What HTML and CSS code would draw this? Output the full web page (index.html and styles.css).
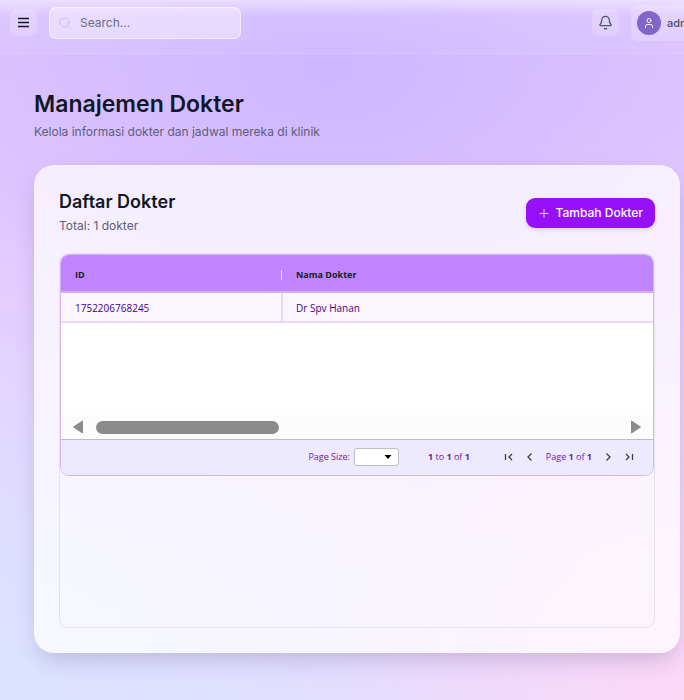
FILE: index.html
```html
<!DOCTYPE html>
<html lang="id">
<head>
<meta charset="utf-8">
<meta name="viewport" content="width=device-width, initial-scale=1">
<title>Manajemen Dokter</title>
<link rel="stylesheet" href="styles.css">
</head>
<body>
<header class="topbar">
  <button class="icon-btn menu" type="button" aria-label="Menu">
    <svg width="13" height="13" viewBox="0 0 13 13" stroke="currentColor" stroke-width="1.5"><path d="M1 2.500h11M1 6.500h11M1 10.500h11"/></svg>
  </button>
  <div class="search">
    <svg width="12" height="12" viewBox="0 0 24 24" fill="none" stroke="currentColor" stroke-width="2" stroke-linecap="round"><circle cx="11" cy="11" r="9"/><path d="m22 22-4.500-4.500"/></svg>
    <input type="search" placeholder="Search..." aria-label="Search">
  </div>
  <button class="icon-btn bell" type="button" aria-label="Notifications">
    <svg width="15" height="15" viewBox="0 0 24 24" fill="none" stroke="currentColor" stroke-width="2" stroke-linecap="round" stroke-linejoin="round"><path d="M10.300 21.500a2 2 0 0 0 3.400 0M3.300 15.300A1 1 0 0 0 4 17h16a1 1 0 0 0 .7-1.700C19.400 14 18 12.500 18 8A6 6 0 0 0 6 8c0 4.500-1.400 6-2.700 7.300"/></svg>
  </button>
  <button class="user" type="button">
    <span class="avatar"><svg width="12" height="12" viewBox="0 0 24 24" fill="none" stroke="currentColor" stroke-width="2" stroke-linecap="round"><circle cx="12" cy="7" r="4"/><path d="M5 21v-2a4 4 0 0 1 4-4h6a4 4 0 0 1 4 4v2"/></svg></span>
    <span>admin</span>
  </button>
</header>
<main class="page">
  <h1>Manajemen Dokter</h1>
  <p class="lead">Kelola informasi dokter dan jadwal mereka di klinik</p>
  <section class="card">
    <div class="card-head">
      <div>
        <h2>Daftar Dokter</h2>
        <p class="total">Total: 1 dokter</p>
      </div>
      <button class="add" type="button">
        <svg width="12" height="12" viewBox="0 0 12 12" fill="none" stroke="currentColor" stroke-opacity="0.8" stroke-linecap="round"><path d="M2 6.500h8M6 2.500v8"/></svg>
        Tambah Dokter
      </button>
    </div>
    <div class="frame">
      <div class="grid">
        <table>
          <thead><tr><th class="col-id" scope="col"><span>ID</span></th><th scope="col">Nama Dokter</th></tr></thead>
          <tbody><tr><td>1752206768245</td><td>Dr Spv Hanan</td></tr></tbody>
        </table>
        <div class="empty"></div>
        <div class="scroll">
          <button type="button" aria-label="Scroll left"><svg width="12" height="14" viewBox="0 0 12 14"><path d="M10.500 1 1.500 7 10.500 13z"/></svg></button>
          <div class="track"><div class="thumb"></div></div>
          <button type="button" aria-label="Scroll right"><svg width="12" height="14" viewBox="0 0 12 14"><path d="M1.500 1 10.500 7 1.500 13z"/></svg></button>
        </div>
        <div class="pager">
          <div class="size">
            <label for="page-size">Page Size:</label>
            <span class="select">
              <select id="page-size"><option></option></select>
              <svg width="8" height="4" viewBox="0 0 8 4"><path d="M0.500 0h7L4 4z"/></svg>
            </span>
          </div>
          <span class="range"><b>1</b> to <b>1</b> of <b>1</b></span>
          <div class="nav">
            <button type="button" aria-label="First page"><svg width="10" height="10" viewBox="0 0 10 10"><path d="M1.500 2v6M8 2 5 5l3 3"/></svg></button>
            <button type="button" aria-label="Previous page"><svg width="10" height="10" viewBox="0 0 10 10"><path d="M6.500 1.500 3 5l3.500 3.500"/></svg></button>
            <span>Page <b>1</b> of <b>1</b></span>
            <button type="button" aria-label="Next page"><svg width="10" height="10" viewBox="0 0 10 10"><path d="M3.500 1.500 7 5 3.500 8.500"/></svg></button>
            <button type="button" aria-label="Last page"><svg width="10" height="10" viewBox="0 0 10 10"><path d="M8.500 2v6M2 2l3 3-3 3"/></svg></button>
          </div>
        </div>
      </div>
    </div>
  </section>
</main>
</body>
</html>
```
FILE: styles.css
```css
* { box-sizing: border-box; }
html { min-height: 100%; }
body {
  margin: 0;
  min-height: 100vh;
  overflow-x: hidden;
  font-family: Inter, sans-serif;
  font-size: 12px;
  line-height: 18px;
  color: #101828;
  background:
    radial-gradient(ellipse 65% 40% at 48% 10%, #cdb7ff 0%, #cdb7ff00 100%),
    radial-gradient(circle at 0% 100%, #dce3ff 0%, #dce3ff00 50%),
    radial-gradient(circle at 100% 100%, #fcd7f8 0%, #fcd7f800 40%),
    linear-gradient(180deg, #dcc3ff 0%, #e6caff 45%, #e4dcff 100%);
}
button, input, select { font: inherit; color: inherit; }
button { padding: 0; border: 0; background: none; display: flex; align-items: center; justify-content: center; }
h1, h2, p { margin: 0; }

.topbar {
  display: flex;
  align-items: center;
  height: 54px;
  padding: 0 0 8px 10px;
  overflow: hidden;
  border-bottom: 1px solid #ffffff33;
  background: linear-gradient(180deg, #ffffff80 0, #ffffff1a 16px, #ffffff0d 100%) padding-box;
}
.icon-btn { flex: none; width: 27px; height: 27px; border-radius: 7px; background: #ffffff33; color: #4a5565; }
.menu { color: #101828; }
.search {
  display: flex;
  align-items: center;
  gap: 9px;
  width: 192px;
  height: 32px;
  margin: 0 auto 0 12px;
  padding: 0 9px;
  border: 1px solid #ffffff80;
  border-radius: 7px;
  background: #ffffff66;
  color: #cbc4d9;
}
.search svg { flex: none; }
.search input { width: 100%; min-width: 0; padding: 0; border: 0; outline: 0; background: none; color: #101828; }
.search input::placeholder { color: #6a6f88; opacity: 1; }
.user {
  flex: none;
  gap: 6px;
  width: 53px;
  height: 36px;
  margin-left: 12px;
  padding-left: 6px;
  justify-content: flex-start;
  border-radius: 7px 0 0 7px;
  background: #ffffff33;
  font-size: 11px;
  font-weight: 500;
  color: #4a5068;
}
.avatar { flex: none; display: flex; align-items: center; justify-content: center; width: 24px; height: 24px; border-radius: 50%; background: #8165cb; color: #fff; }

.page { padding: 36px 4px 47px 34px; }
h1 { font-size: 23px; line-height: 28px; font-weight: 600; }
.lead { margin-top: 5px; color: #5b6078; }
.card {
  margin-top: 24px;
  padding: 25px;
  border-radius: 20px;
  background: #ffffffb8;
  box-shadow: 0 10px 24px -6px #3c286440;
}
.card-head { display: flex; align-items: center; justify-content: space-between; margin-bottom: 18px; }
h2 { font-size: 18px; line-height: 24px; font-weight: 600; }
.total { margin-top: 3px; color: #5b6070; }
.add {
  gap: 6px;
  height: 30px;
  padding: 0 12px;
  border-radius: 9px;
  background: #9810fa;
  color: #fff;
  font-weight: 500;
  box-shadow: 0 2px 4px #0000001f;
}

.frame { min-height: 375px; border: 1px solid #e5e3ec; border-radius: 9px; }
.grid {
  overflow: hidden;
  border: 1px solid #d6b3ff;
  border-radius: 9px;
  background: #fff;
  font-family: "Open Sans", "Noto Sans", sans-serif;
  font-size: 10px;
  line-height: 14px;
}
table { width: 100%; border-collapse: separate; border-spacing: 0; table-layout: fixed; }
th, td { padding: 0 13px; text-align: left; }
th { height: 38px; padding-top: 4px; border-bottom: 2px solid #cfb2f0; background: #c084fc; color: #181d1f; font-size: 9px; font-weight: 700; }
.col-id { width: 222px; padding-right: 1px; }
.col-id span { display: block; border-right: 1px solid #e9d5ff; line-height: 10px; }
td { height: 30px; padding-top: 2px; border-bottom: 2px solid #e4daf8; background: #faf5ff; color: #4b0082; }
th:first-child, td:first-child { padding-left: 14px; }
td:first-child { border-right: 2px solid #e9d5ff; }
.empty { height: 92px; }
.scroll { display: flex; align-items: center; height: 24px; padding: 0 11px; background: #fcfcfc; fill: #8b8b8b; }
.scroll path { stroke: #8b8b8b; stroke-linejoin: round; }
.track { flex: 1; padding: 0 12px; }
.thumb { width: 35%; height: 13px; border-radius: 7px; background: #8b8b8b; }
.pager {
  display: flex;
  align-items: center;
  justify-content: flex-end;
  height: 36px;
  padding: 0 19px 1px 0;
  border-top: 1px solid #babfc7;
  background: #ede9fe;
  color: #6b21a8;
  font-size: 9px;
}
.size { display: flex; align-items: center; gap: 4px; }
.select { position: relative; display: flex; }
.select select { width: 45px; height: 18px; padding: 0 4px; border: 1px solid #babfc7; border-radius: 3px; background: #fff; appearance: none; }
.select svg { position: absolute; right: 7px; top: 7px; pointer-events: none; }
.range { margin: 0 34px 0 29px; }
.nav { display: flex; align-items: center; gap: 11px; }
.nav svg { fill: none; stroke: #3f3a50; stroke-width: 1.3; }
```
